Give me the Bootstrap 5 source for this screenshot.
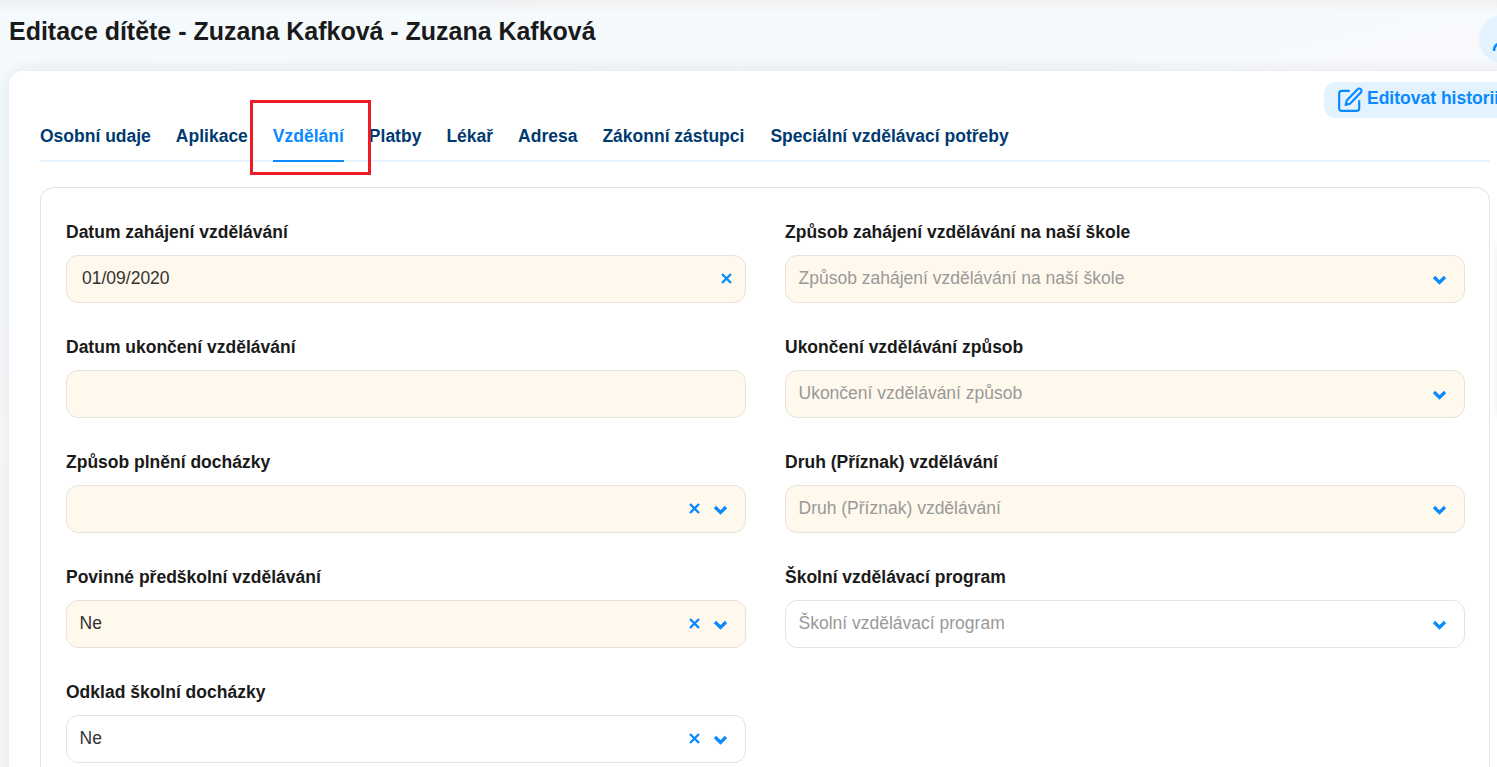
<!DOCTYPE html>
<html lang="cs">
<head>
<meta charset="utf-8">
<title>Editace dítěte</title>
<link href="https://cdn.jsdelivr.net/npm/bootstrap@5.3.0/dist/css/bootstrap.min.css" rel="stylesheet">
<style>
html,body{height:767px;overflow:hidden}
body{font-family:"Liberation Sans",Arial,sans-serif;background:linear-gradient(165deg,#f4fafd 0%,#f8f9fb 45%,#faf5f8 100%);color:#1a1a1a;position:relative;width:1497px}
.top-fade{height:71px;padding:16px 0 0 9px;background:linear-gradient(180deg,#f0f0f1 0,rgba(240,240,241,0) 12px);position:relative;overflow:hidden}
.page-title{font-size:24.96px;line-height:30px;font-weight:700;color:#1a1a1a;margin:0}
.avatar-circle{position:absolute;left:1479px;top:15px;width:48px;height:48px;border-radius:50%;background:#e2f2ff}
.avatar-circle svg{position:absolute;left:13px;top:15px}
.sheet{margin-left:9px;width:1540px;height:720px;background:#fff;border-radius:14px 0 0 0;padding:11px 0 0 31px;position:relative;box-shadow:0 0 16px rgba(40,40,60,.1)}
.hist-btn{position:absolute;left:1315px;top:11px;width:240px;height:36px;background:#e2f2ff;border-radius:12px;color:#0a8aff;font-size:17.5px;line-height:20px;font-weight:700;padding:0 0 1px 13px;gap:4px;white-space:nowrap}
.hist-txt{margin-bottom:3px}
.tabs-bar{width:1450px;height:80px;border-bottom:2px solid #e6f3ff;gap:25px;flex-wrap:nowrap;align-items:flex-end}
.tab-item{font-size:17.5px;line-height:18px;font-weight:700;color:#003a70;text-decoration:none;padding:0 0 15px;margin-bottom:-2px;border-bottom:2px solid transparent;white-space:nowrap;display:block}
.tab-item.is-on{color:#0a8aff;border-bottom-color:#0a8aff}
.tab-item.tab-last{margin-left:1px}
.form-box{width:1450px;height:620px;margin-top:25px;border:1px solid #e4e4e4;border-bottom:0;border-radius:14px 14px 0 0;padding:24px 24px 0 25px}
.form-grid{--bs-gutter-x:39px;--bs-gutter-y:0}
.fld{height:115px;padding-top:10px}
.fld-label{font-size:17.5px;line-height:20px;font-weight:700;color:#1a1a1a;margin:0 0 13px;display:block}
.fld-input{height:48px;border:1px solid #e6e2dc;border-radius:12px;background:#fff;font-size:17.5px;color:#333;padding:0 12px 0 12.5px;gap:12px}
.fld-input.warm{background:#fff8ec}
.fld-input .val{flex:1 1 auto;white-space:nowrap;padding-bottom:2px}
.fld-input .val.date{padding-left:2.5px}
.fld-input .val.hint{color:#999}
.red-note{position:absolute;left:250px;top:100px;width:121px;height:75px;border:3px solid #ed1c24;pointer-events:none}
.side-glow{position:absolute;left:1500px;top:245px;width:40px;height:170px;box-shadow:0 0 10px rgba(0,0,0,.14)}
.ico-x{width:13px;height:13px;flex:none;margin-bottom:2px}
.ico-c{width:15px;height:10px;flex:none;margin:2px 5px 0 0}
</style>
</head>
<body>
<svg width="0" height="0" class="position-absolute">
  <defs>
    <symbol id="i-x" viewBox="0 0 13 13"><path d="M2 2l9 9M11 2l-9 9" fill="none" stroke="#0a8aff" stroke-width="2.400"/></symbol>
    <symbol id="i-c" viewBox="0 0 15 10"><path d="M2 2l5.500 5.500L13 2" fill="none" stroke="#0a8aff" stroke-width="3.200"/></symbol>
  </defs>
</svg>

<header class="top-fade">
  <h1 class="page-title">Editace dítěte - Zuzana Kafková - Zuzana Kafková</h1>
  <div class="avatar-circle"><svg width="22" height="22" viewBox="0 0 22 22"><circle cx="11" cy="6" r="4" fill="none" stroke="#0a8aff" stroke-width="2.500"/><path d="M2 21c0-6 4-8 9-8s9 2 9 8" fill="none" stroke="#0a8aff" stroke-width="2.500"/></svg></div>
</header>

<main class="sheet">
  <a class="hist-btn d-flex align-items-center text-decoration-none" href="#">
    <svg width="26" height="26" viewBox="0 0 24 24" fill="none" stroke="#0a8aff" stroke-width="2" stroke-linecap="round" stroke-linejoin="round"><path d="M11 3.500H4.500a2.500 2.500 0 0 0-2.500 2.500v13.500a2.500 2.500 0 0 0 2.500 2.500H18a2.500 2.500 0 0 0 2.500-2.500V13"/><path d="M19 2a2.100 2.100 0 0 1 3 3l-10 10.500-4 1 1-4z"/></svg>
    <span class="hist-txt">Editovat historii</span>
  </a>

  <nav class="tabs-bar d-flex">
    <a class="tab-item" href="#">Osobní udaje</a>
    <a class="tab-item" href="#">Aplikace</a>
    <a class="tab-item is-on" href="#">Vzdělání</a>
    <a class="tab-item" href="#">Platby</a>
    <a class="tab-item" href="#">Lékař</a>
    <a class="tab-item" href="#">Adresa</a>
    <a class="tab-item" href="#">Zákonní zástupci</a>
    <a class="tab-item tab-last" href="#">Speciální vzdělávací potřeby</a>
  </nav>

  <section class="form-box">
    <div class="row form-grid">
      <div class="col-6">
        <div class="fld"><label class="fld-label">Datum zahájení vzdělávání</label>
          <div class="fld-input warm d-flex align-items-center"><span class="val date">01/09/2020</span><svg class="ico-x"><use href="#i-x"/></svg></div></div>
        <div class="fld"><label class="fld-label">Datum ukončení vzdělávání</label>
          <div class="fld-input warm d-flex align-items-center"><span class="val"></span></div></div>
        <div class="fld"><label class="fld-label">Způsob plnění docházky</label>
          <div class="fld-input warm d-flex align-items-center"><span class="val"></span><svg class="ico-x"><use href="#i-x"/></svg><svg class="ico-c"><use href="#i-c"/></svg></div></div>
        <div class="fld"><label class="fld-label">Povinné předškolní vzdělávání</label>
          <div class="fld-input warm d-flex align-items-center"><span class="val">Ne</span><svg class="ico-x"><use href="#i-x"/></svg><svg class="ico-c"><use href="#i-c"/></svg></div></div>
        <div class="fld"><label class="fld-label">Odklad školní docházky</label>
          <div class="fld-input d-flex align-items-center"><span class="val">Ne</span><svg class="ico-x"><use href="#i-x"/></svg><svg class="ico-c"><use href="#i-c"/></svg></div></div>
      </div>
      <div class="col-6">
        <div class="fld"><label class="fld-label">Způsob zahájení vzdělávání na naší škole</label>
          <div class="fld-input warm d-flex align-items-center"><span class="val hint">Způsob zahájení vzdělávání na naší škole</span><svg class="ico-c"><use href="#i-c"/></svg></div></div>
        <div class="fld"><label class="fld-label">Ukončení vzdělávání způsob</label>
          <div class="fld-input warm d-flex align-items-center"><span class="val hint">Ukončení vzdělávání způsob</span><svg class="ico-c"><use href="#i-c"/></svg></div></div>
        <div class="fld"><label class="fld-label">Druh (Příznak) vzdělávání</label>
          <div class="fld-input warm d-flex align-items-center"><span class="val hint">Druh (Příznak) vzdělávání</span><svg class="ico-c"><use href="#i-c"/></svg></div></div>
        <div class="fld"><label class="fld-label">Školní vzdělávací program</label>
          <div class="fld-input d-flex align-items-center"><span class="val hint">Školní vzdělávací program</span><svg class="ico-c"><use href="#i-c"/></svg></div></div>
      </div>
    </div>
  </section>
</main>
<div class="red-note"></div>
<div class="side-glow"></div>
<script src="https://cdn.jsdelivr.net/npm/bootstrap@5.3.0/dist/js/bootstrap.bundle.min.js"></script>
</body>
</html>
